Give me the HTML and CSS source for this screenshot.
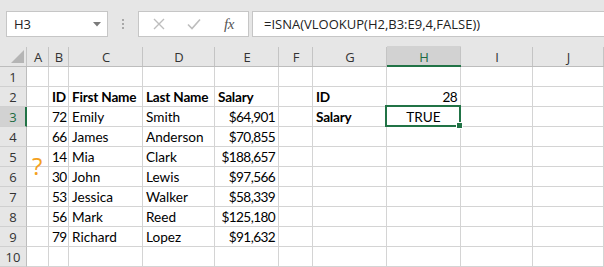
FILE: index.html
```html
<!DOCTYPE html>
<html>
<head>
<meta charset="utf-8">
<link rel="stylesheet" href="styles.css">
</head>
<body>
<div class="app">
  <div class="toolbar">
    <div class="namebox"><span class="ref">H3</span><svg class="caret" width="8" height="5" viewBox="0 0 8 5"><polygon points="0,0 8,0 4,4.5" fill="#7a7a7a"/></svg></div>
    <div class="grip"><i></i><i></i><i></i></div>
    <div class="fbuttons">
      <svg class="ico" width="12" height="12" viewBox="0 0 12 12"><path d="M1 1 L11 11 M11 1 L1 11" stroke="#bdbdbd" stroke-width="1.4" fill="none"/></svg>
      <svg class="ico" width="14" height="12" viewBox="0 0 14 12"><path d="M1 6.5 L5 10.5 L13 1.5" stroke="#bdbdbd" stroke-width="1.6" fill="none"/></svg>
      <span class="fx">fx</span>
    </div>
    <div class="finput">=ISNA(VLOOKUP(H2,B3:E9,4,FALSE))</div>
  </div>
  <div class="sheet">
    <div class="ch corner"><svg width="13" height="13" viewBox="0 0 13 13"><polygon points="13,0 13,13 0,13" fill="#b5b5b5"/></svg></div>
    <div class="ch">A</div><div class="ch">B</div><div class="ch">C</div><div class="ch">D</div><div class="ch">E</div><div class="ch">F</div><div class="ch">G</div><div class="ch sel">H</div><div class="ch">I</div><div class="ch">J</div>

    <div class="rh">1</div><div class="c"></div><div class="c"></div><div class="c"></div><div class="c"></div><div class="c"></div><div class="c"></div><div class="c"></div><div class="c"></div><div class="c"></div><div class="c"></div>

    <div class="rh">2</div><div class="c"></div><div class="c b">ID</div><div class="c b">First Name</div><div class="c b">Last Name</div><div class="c b">Salary</div><div class="c"></div><div class="c b">ID</div><div class="c r">28</div><div class="c"></div><div class="c"></div>

    <div class="rh sel">3</div><div class="c"></div><div class="c r">72</div><div class="c">Emily</div><div class="c">Smith</div><div class="c r">$64,901</div><div class="c"></div><div class="c b">Salary</div><div class="c m active">TRUE</div><div class="c"></div><div class="c"></div>

    <div class="rh">4</div><div class="c"></div><div class="c r">66</div><div class="c">James</div><div class="c">Anderson</div><div class="c r">$70,855</div><div class="c"></div><div class="c"></div><div class="c"></div><div class="c"></div><div class="c"></div>

    <div class="rh">5</div><div class="c qcell"><span class="q">?</span></div><div class="c r">14</div><div class="c">Mia</div><div class="c">Clark</div><div class="c r">$188,657</div><div class="c"></div><div class="c"></div><div class="c"></div><div class="c"></div><div class="c"></div>

    <div class="rh">6</div><div class="c"></div><div class="c r">30</div><div class="c">John</div><div class="c">Lewis</div><div class="c r">$97,566</div><div class="c"></div><div class="c"></div><div class="c"></div><div class="c"></div><div class="c"></div>

    <div class="rh">7</div><div class="c"></div><div class="c r">53</div><div class="c">Jessica</div><div class="c">Walker</div><div class="c r">$58,339</div><div class="c"></div><div class="c"></div><div class="c"></div><div class="c"></div><div class="c"></div>

    <div class="rh">8</div><div class="c"></div><div class="c r">56</div><div class="c">Mark</div><div class="c">Reed</div><div class="c r">$125,180</div><div class="c"></div><div class="c"></div><div class="c"></div><div class="c"></div><div class="c"></div>

    <div class="rh">9</div><div class="c"></div><div class="c r">79</div><div class="c">Richard</div><div class="c">Lopez</div><div class="c r">$91,632</div><div class="c"></div><div class="c"></div><div class="c"></div><div class="c"></div><div class="c"></div>

    <div class="rh">10</div><div class="c"></div><div class="c"></div><div class="c"></div><div class="c"></div><div class="c"></div><div class="c"></div><div class="c"></div><div class="c"></div><div class="c"></div><div class="c"></div>
  </div>
</div>
</body>
</html>
```

FILE: styles.css
```css
html, body {
  margin: 0;
  padding: 0;
  background: #ffffff;
}

.app {
  width: 604px;
  height: 267px;
  overflow: hidden;
  font-family: "Open Sans", "Noto Sans", sans-serif;
}

.toolbar {
  height: 46px;
  box-sizing: border-box;
  background: #e6e6e6;
  display: flex;
  align-items: flex-start;
  padding-top: 11px;
}

.namebox {
  margin-left: 6px;
  width: 102px;
  height: 26px;
  box-sizing: border-box;
  border: 1px solid #c6c6c6;
  background: #fff;
  display: flex;
  align-items: center;
  justify-content: space-between;
  padding: 0 6px 0 7px;
  font-size: 13px;
  color: #222;
}

.grip {
  width: 30px;
  height: 26px;
  display: flex;
  flex-direction: column;
  align-items: center;
  justify-content: center;
  gap: 2px;
}

.grip i {
  display: block;
  width: 2px;
  height: 2px;
  background: #a8a8a8;
}

.fbuttons {
  width: 111px;
  height: 26px;
  box-sizing: border-box;
  border: 1px solid #c6c6c6;
  background: #fff;
  display: flex;
  align-items: center;
  padding-left: 14px;
  gap: 22px;
}

.fx {
  font-family: "Liberation Serif", serif;
  font-style: italic;
  font-size: 15px;
  color: #555;
  margin-left: 1px;
  letter-spacing: -0.5px;
}

.finput {
  margin-left: 3px;
  flex: 1;
  height: 26px;
  box-sizing: border-box;
  border: 1px solid #c6c6c6;
  border-right: none;
  background: #fff;
  font-size: 13px;
  line-height: 24px;
  padding-left: 11px;
  color: #222;
  white-space: nowrap;
}

.sheet {
  display: grid;
  grid-template-columns: 27px 22px 20px 74px 72px 64px 34px 74px 74px 72px 71px;
  grid-template-rows: 21px repeat(10, 20px);
}

.ch {
  background: #e6e6e6;
  border-bottom: 1px solid #bdbdbd;
  box-sizing: border-box;
  font-size: 13px;
  color: #333;
  text-align: center;
  line-height: 22px;
  position: relative;
}

.ch::after {
  content: "";
  position: absolute;
  right: 0;
  top: 1px;
  bottom: 0;
  width: 1px;
  background: #c4c4c4;
}

.ch.corner {
  display: flex;
  justify-content: flex-end;
  align-items: flex-end;
  padding: 0 3px 3px 0;
}

.ch.sel {
  background: #d2d2d2;
  border-bottom: 2px solid #217346;
  color: #1d6b42;
}

.rh {
  background: #e6e6e6;
  border-right: 1px solid #bdbdbd;
  border-bottom: 1px solid #d0d0d0;
  box-sizing: border-box;
  font-size: 13px;
  color: #333;
  text-align: center;
  line-height: 20px;
}

.rh.sel {
  background: #d2d2d2;
  border-right: 2px solid #217346;
  color: #1d6b42;
  padding-left: 1px;
}

.c {
  border-right: 1px solid #d4d4d4;
  border-bottom: 1px solid #d4d4d4;
  box-sizing: border-box;
  font-family: Lato, "Open Sans", sans-serif;
  font-size: 13.6px;
  color: #000;
  line-height: 21px;
  padding: 0 3px;
  white-space: nowrap;
  overflow: visible;
}

.c.b {
  font-weight: bold;
  letter-spacing: -0.2px;
}

.c.r {
  text-align: right;
  letter-spacing: -0.6px;
}

.c.m {
  text-align: center;
}

.c.active {
  position: relative;
}

.c.active::before {
  content: "";
  position: absolute;
  left: -2px;
  top: -2px;
  right: -1px;
  bottom: -1px;
  border: 2px solid #217346;
}

.c.active::after {
  content: "";
  position: absolute;
  right: -3px;
  bottom: -3px;
  width: 5px;
  height: 5px;
  background: #217346;
  border: 1px solid #fff;
}

.qcell {
  position: relative;
}

.q {
  position: absolute;
  left: 5px;
  top: 7px;
  font-family: "Open Sans", sans-serif;
  font-size: 24px;
  line-height: 24px;
  color: #f4a11e;
}
```
